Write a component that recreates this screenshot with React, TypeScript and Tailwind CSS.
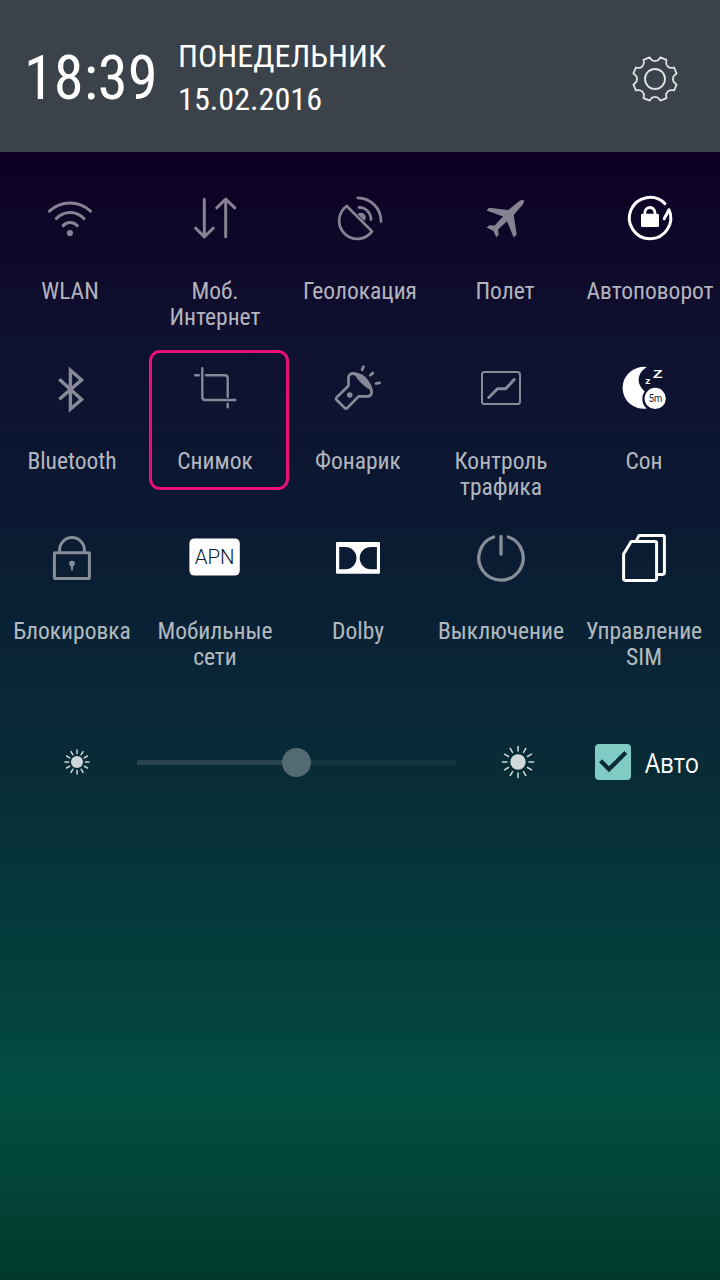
import type { ReactNode } from 'react';

type Tile = {
  label: string;
  icon: ReactNode;
  active?: boolean;
  marked?: boolean;
};

// All tile icons are drawn around the origin of a 56x56 box.
function Icon({ children, active }: { children: ReactNode; active?: boolean }) {
  return (
    <svg
      viewBox="-28 -28 56 56"
      className={active ? 'h-14 w-14 text-white' : 'h-14 w-14 text-white opacity-50'}
      fill="none"
      stroke="currentColor"
      strokeWidth="3"
      strokeLinecap="round"
      strokeLinejoin="round"
    >
      {children}
    </svg>
  );
}

const wifi = (
  <>
    <path d="M-20.5 -6.9A30 30 0 0 1 20.5 -6.9M-13.6 .6A18.6 18.6 0 0 1 13.9 .6M-6.8 7.6A9.7 9.7 0 0 1 7.2 7.6" />
    <circle cx="0" cy="15" r="3.1" fill="currentColor" stroke="none" />
  </>
);

const data = (
  <path d="M-10.7 -18.7V18.7M-19.3 10.2L-10.7 18.9L-1.8 10.2M10.7 18.7V-18.7M1.8 -10.2L10.7 -18.9L19.8 -10.2" />
);

const satellite = (
  <g strokeWidth="2.7">
    <path d="M-13.3 -12A18.15 18.15 0 1 0 12 13.4Z" />
    <path d="M-2.4 -3.8A3.6 3.6 0 0 1 4.4 2.9Z" fill="currentColor" stroke="none" />
    <path d="M-1 -10.6A12 12 0 0 1 11 1.6M-2.3 -20.2A23.4 23.4 0 0 1 21 3.4" />
  </g>
);

const plane = (
  <path
    d="M14 -16.8Q17 -19 18.6 -18Q19.6 -16.4 17.8 -13.6L8.7 -3L11.7 16.4L8.7 19.4L1.9 3.2L-7 11.6L-6.3 16.6L-8.6 19.5L-11.6 12.9L-18.3 9.6L-15.8 7.2L-10.4 7.6L-1.9 -1.5L-18.4 -7.6L-16 -10.2L3.3 -8Z"
    fill="currentColor"
    stroke="none"
  />
);

const rotateLock = (
  <>
    <path d="M14.9 -14.4A20.7 20.7 0 1 0 19 -8.3L14.2 .8" />
    <path d="M-5.1 -3.5V-5.5A5 5 0 0 1 4.9 -5.5V-3.5" strokeWidth="2.8" />
    <rect x="-9" y="-4.3" width="18" height="13.4" rx="1.4" fill="currentColor" stroke="none" />
  </>
);

const bluetooth = (
  <path
    d="M-12.7 -8.7L9.6 11.5L-1.6 21V-17.7L9.6 -8.1L-12.7 11.2"
    strokeWidth="3.4"
    strokeLinecap="butt"
    strokeLinejoin="miter"
  />
);

const crop = (
  <path
    d="M-12.7 -19.8V9Q-12.7 12 -9.7 12H20.4M-9 -12.7H9.7Q12.7 -12.7 12.7 -9.7V8.8M-19.8 -12.7H-16.2M12.7 15.8V19.2"
    strokeWidth="2.4"
  />
);

const flashlight = (
  <>
    <path
      d="M-21.3 9.4L-9.5 -2.3V-10.6Q-9.3 -13.6 -5.6 -14.6Q10 -11 13.7 4Q13.6 8 10 8.4H.6L-10.9 20.1Q-12 21 -13.1 20.1L-21.3 12Q-22.4 10.6 -21.3 9.4Z"
      strokeWidth="2.7"
    />
    <path d="M-5 -15.6Q-1 -16.6 7 -11.6Q14 -4.4 14.8 3Q4 -1 -5 -15.6Z" fill="currentColor" stroke="none" />
    <circle cx="-8.3" cy="7" r="2.8" fill="currentColor" stroke="none" />
    <path d="M4.2 -18.3L5.4 -21.3M12.4 -12.8L14.8 -14.9M18.2 -4.6L21.6 -5.2" strokeWidth="2.8" />
  </>
);

const traffic = (
  <>
    <rect x="-19" y="-16" width="38" height="32" rx="2.6" strokeWidth="2" />
    <path d="M-12.2 9.5L-3.5 .8H4.6L13.2 -8.4" />
  </>
);

const sleep = (
  <>
    <path
      d="M2.8 -20.9A21 21 0 1 0 2.8 20.6A12.8 12.8 0 0 1 .7 3.4Q-5.4 -2 -5.4 -8.4Q-5 -16 2.8 -20.9Z"
      fill="currentColor"
      stroke="none"
    />
    <circle cx="11.2" cy="10.4" r="10.6" fill="currentColor" stroke="none" />
    <text x="4.7" y="14.4" textLength="13.4" lengthAdjust="spacingAndGlyphs" fontSize="11.6" stroke="none" className="fill-[#0d1733] font-[Roboto,sans-serif]">5m</text>
    <text x="9" y="-10" textLength="9.6" lengthAdjust="spacingAndGlyphs" fontSize="11.4" fontWeight="700" fill="currentColor" stroke="none" className="font-['Liberation_Sans',sans-serif]">Z</text>
    <text x="1.2" y="-4" textLength="5.2" lengthAdjust="spacingAndGlyphs" fontSize="9.4" fontWeight="700" fill="currentColor" stroke="none" className="font-['Liberation_Sans',sans-serif]">z</text>
  </>
);

const lock = (
  <>
    <rect x="-17.6" y="-5.2" width="35" height="25.8" rx="0.8" />
    <path d="M-12.4 -5.5V-8A12.4 12.4 0 0 1 12.4 -8V-5.5" strokeLinecap="butt" />
    <path d="M0 6V11.4" strokeWidth="2" />
    <circle cx="0" cy="5.6" r="2.9" fill="currentColor" stroke="none" />
  </>
);

const apn = (
  <>
    <rect x="-25.6" y="-19.6" width="50.4" height="37.2" rx="5" fill="currentColor" stroke="none" />
    <text x="-20.2" y="6.2" textLength="39.8" lengthAdjust="spacingAndGlyphs" fontSize="19.6" fontWeight="350" stroke="none" className="fill-[#0a1c35] font-[Roboto,sans-serif]">APN</text>
  </>
);

const dolby = (
  <path
    d="M-21 -16H21Q22 -16 22 -15V14.7Q22 15.7 21 15.7H-21Q-22 15.7 -22 14.7V-15Q-22 -16 -21 -16ZM-18.8 -11V11.2H-12.6A11.1 11.1 0 0 0 -12.6 -11ZM18.9 -11V11.2H12.8A11.1 11.1 0 0 1 12.8 -11Z"
    fill="currentColor"
    fillRule="evenodd"
    stroke="none"
  />
);

const power = <path d="M-7.4 -21A22.2 22.2 0 1 0 7.4 -21M0 -21.6V-3.8" strokeWidth="3.3" />;

const sim = (
  <path
    d="M-20.4 -4L-12.8 -16.6H10.8Q12.6 -16.6 12.6 -14.8V20.6Q12.6 22.4 10.8 22.4H-18.6Q-20.4 22.4 -20.4 20.6ZM-7.6 -17.4L-5 -22.4H18.6Q20.4 -22.4 20.4 -20.6V14.6Q20.4 16.4 18.6 16.4H14"
    strokeLinecap="butt"
  />
);

const rows: { className: string; tiles: Tile[] }[] = [
  {
    className: '-ml-[2.5px] w-[725px]',
    tiles: [
      { label: 'WLAN', icon: wifi },
      { label: 'Моб.\nИнтернет', icon: data },
      { label: 'Геолокация', icon: satellite },
      { label: 'Полет', icon: plane },
      { label: 'Автоповорот', icon: rotateLock, active: true },
    ],
  },
  {
    className: 'ml-[0.5px] w-[715px]',
    tiles: [
      { label: 'Bluetooth', icon: bluetooth },
      { label: 'Снимок', icon: crop, marked: true },
      { label: 'Фонарик', icon: flashlight },
      { label: 'Контроль\nтрафика', icon: traffic },
      { label: 'Сон', icon: sleep, active: true },
    ],
  },
  {
    className: 'ml-[0.5px] w-[715px]',
    tiles: [
      { label: 'Блокировка', icon: lock },
      { label: 'Мобильные\nсети', icon: apn, active: true },
      { label: 'Dolby', icon: dolby, active: true },
      { label: 'Выключение', icon: power },
      { label: 'Управление\nSIM', icon: sim, active: true },
    ],
  },
];

function TileButton({ label, icon, active, marked }: Tile) {
  return (
    <div className="relative flex flex-col items-center">
      <Icon active={active}>{icon}</Icon>
      <span className="mt-8 text-center text-[23.5px] leading-[26px] whitespace-pre text-white/70">{label}</span>
      {marked && (
        <div className="absolute -top-[10px] left-[5px] h-[140px] w-[140px] rounded-[11px] border-[3px] border-[#ea0f7b]" />
      )}
    </div>
  );
}

function polar(radius: number, degrees: number) {
  const a = (degrees * Math.PI) / 180;
  return `${(radius * Math.sin(a)).toFixed(2)} ${(-radius * Math.cos(a)).toFixed(2)}`;
}

// Eight teeth separated by round notches every 45 degrees.
const gearPath =
  [0, 45, 90, 135, 180, 225, 270, 315]
    .map((a, i) => `${i ? 'L' : 'M'}${polar(22.3, a - 14)}L${polar(20.8, a - 12.5)}A5.4 5.4 0 0 0 ${polar(20.8, a + 12.5)}L${polar(22.3, a + 14)}`)
    .join('') + 'Z';

function Gear() {
  return (
    <svg viewBox="-24 -24 48 48" className="h-12 w-12 text-white/85" fill="none" stroke="currentColor" strokeWidth="1.8" strokeLinejoin="round">
      <path d={gearPath} />
      <circle r="10" />
    </svg>
  );
}

function Sun({ core, inner, outer }: { core: number; inner: number; outer: number }) {
  const rays = Array.from({ length: 12 }, (_, i) => `M${polar(inner, i * 30)}L${polar(outer, i * 30)}`).join('');
  return (
    <svg viewBox="-18 -18 36 36" className="h-9 w-9 shrink-0 text-[#d0d8da]" stroke="currentColor" strokeWidth="1.5" strokeLinecap="round">
      <circle r={core} fill="currentColor" stroke="none" />
      <path d={rays} />
    </svg>
  );
}

export default function App() {
  return (
    <div className="flex h-[1280px] w-[720px] flex-col overflow-hidden bg-[linear-gradient(180deg,#0d0022_152px,#0f1130_345px,#0b1831_500px,#092536_670px,#082f37_810px,#043b3c_930px,#04433d_1010px,#024d42_1085px,#014838_1155px,#034236_1200px,#003e2e_1235px,#00392b_1280px)] font-['Roboto_Condensed',Roboto,sans-serif]">
      <header className="flex h-[152px] shrink-0 items-center bg-[#3b4249] pr-[41.5px] pl-6 text-white">
        <div className="w-[154px] pt-1.5 text-[60.5px] leading-none">18:39</div>
        <div className="flex-1 pt-[3px] text-[32.2px] leading-[43px]">
          <div>ПОНЕДЕЛЬНИК</div>
          <div>15.02.2016</div>
        </div>
        <div className="pt-[5px]">
          <Gear />
        </div>
      </header>

      <main className="pt-[38px]">
        {rows.map((row) => (
          <div key={row.tiles[0].label} className={row.className}>
            <div className="grid h-[170px] grid-cols-5">
              {row.tiles.map((tile) => (
                <TileButton key={tile.label} {...tile} />
              ))}
            </div>
          </div>
        ))}
      </main>

      <div className="flex h-[124px] items-center pl-[58.5px]">
        <Sun core={6} inner={8.4} outer={12} />
        <div className="relative ml-[42.5px] flex h-[5px] w-[319px] items-center bg-[#15353f]">
          <div className="h-full w-1/2 bg-[#28454f]" />
          <div className="absolute left-[145px] size-[29px] rounded-full bg-[#526b72]" />
        </div>
        <div className="ml-[43.5px] flex">
          <Sun core={7.7} inner={11} outer={15.6} />
        </div>
        <div className="ml-[59.5px] size-9 shrink-0 rounded-[4px] bg-[#80cbc4]">
          <svg viewBox="0 0 36 36" className="size-9" fill="none" stroke="#082c37" strokeWidth="4.2">
            <path d="M5.6 16.8L14 25.2L30.8 8.6" />
          </svg>
        </div>
        <span className="ml-3.5 origin-left scale-x-[0.88] pt-0.5 font-['Open_Sans','Noto_Sans',sans-serif] text-[27px] leading-9 font-medium text-white">Авто</span>
      </div>
    </div>
  );
}
